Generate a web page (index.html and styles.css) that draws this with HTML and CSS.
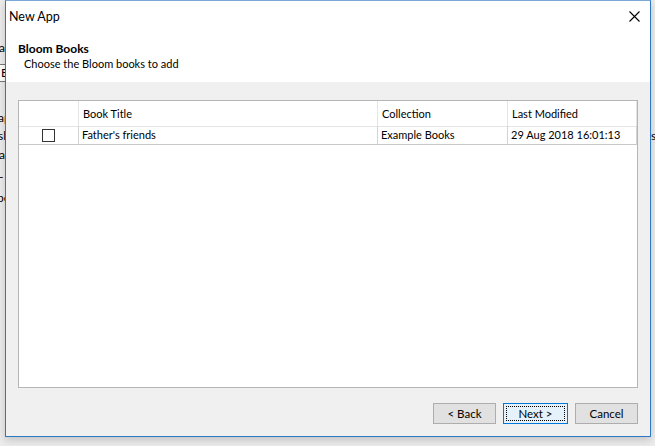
FILE: index.html
```html
<!DOCTYPE html>
<html>
<head>
<meta charset="utf-8">
<link rel="stylesheet" href="styles.css">
</head>
<body>
<div class="desktop">
  <div class="behind">
    <span class="frag f1">a</span>
    <span class="frag combo">E</span>
    <span class="frag f2">ap</span>
    <span class="frag f3">sl</span>
    <span class="frag f4">a</span>
    <span class="frag f5">-</span>
    <span class="frag f6">pe</span>
    <span class="frag f7">s</span>
  </div>
  <div class="window">
    <div class="titlebar">
      <span class="title">New App</span>
      <span class="close">
        <svg width="11" height="11" viewBox="0 0 11 11"><path d="M0.5 0.5 L10.5 10.5 M10.5 0.5 L0.5 10.5" stroke="#000" stroke-width="1.1" fill="none"/></svg>
      </span>
    </div>
    <div class="header">
      <div class="h-title">Bloom Books</div>
      <div class="h-sub">Choose the Bloom books to add</div>
    </div>
    <div class="body">
      <div class="list">
        <div class="row head">
          <div class="cell c1"></div>
          <div class="cell c2">Book Title</div>
          <div class="cell c3">Collection</div>
          <div class="cell c4">Last Modified</div>
        </div>
        <div class="row item">
          <div class="cell c1"><span class="check"></span></div>
          <div class="cell c2">Father's friends</div>
          <div class="cell c3">Example Books</div>
          <div class="cell c4">29 Aug 2018 16:01:13</div>
        </div>
      </div>
      <div class="buttons">
        <button class="btn back">&lt; Back</button>
        <button class="btn next"><span class="focus">Next &gt;</span></button>
        <button class="btn cancel">Cancel</button>
      </div>
    </div>
  </div>
</div>
</body>
</html>
```

FILE: styles.css
```css
* { box-sizing: border-box; }
html, body { margin: 0; padding: 0; }
body {
  width: 655px;
  height: 446px;
  overflow: hidden;
  background: #ececec;
  font-family: "Segoe UI", "Lato", "Liberation Sans", sans-serif;
  font-size: 11px;
  color: #000;
}
.desktop {
  position: relative;
  width: 655px;
  height: 446px;
}
.behind { position: absolute; inset: 0; }
.frag { position: absolute; font-size: 12px; line-height: 14px; color: #000; }
.f1 { left: -1px; top: 41px; }
.combo { left: -4px; top: 64px; width: 10px; height: 18px; border: 1px solid #7a7a7a; background: #fff; padding-left: 4px; line-height: 16px; }
.f2 { left: -2px; top: 111px; }
.f3 { left: -2px; top: 129px; }
.f4 { left: -1px; top: 148px; }
.f5 { left: -1px; top: 170px; }
.f6 { left: -3px; top: 191px; }
.f7 { left: 651px; top: 129px; }

.window {
  position: absolute;
  left: 5px;
  top: 0;
  width: 646px;
  height: 437px;
  border: 1px solid #2b79c2;
  border-top-color: #7aa7d6;
  background: #f0f0f0;
  display: flex;
  flex-direction: column;
  box-shadow: 0 3px 8px rgba(0,0,0,0.18);
}
.titlebar {
  height: 30px;
  background: #fff;
  display: flex;
  align-items: center;
  justify-content: space-between;
  padding-left: 3px;
}
.title { font-size: 12.5px; line-height: 16px; padding-top: 1px; }
.close {
  width: 32px;
  height: 30px;
  display: flex;
  align-items: center;
  justify-content: center;
}
.header {
  height: 51px;
  background: #fff;
  padding: 10px 12px 0 12px;
}
.h-title { font-weight: bold; font-size: 12px; line-height: 15px; }
.h-sub { font-size: 11px; line-height: 15px; padding-left: 6px; }
.body {
  flex: 1;
  padding: 18px 12px 12px 12px;
  display: flex;
  flex-direction: column;
}
.list {
  height: 288px;
  background: #fff;
  border: 1px solid #b5b5b5;
}
.row {
  display: grid;
  grid-template-columns: 60px 299px 130px 129px;
}
.head { height: 25px; }
.head .cell {
  border-right: 1px solid #e5e5e5;
  border-bottom: 1px solid #e5e5e5;
  line-height: 25px;
  padding-left: 4px;
}
.item { height: 18px; }
.item .cell {
  border-right: 1px solid #d4d4d4;
  border-bottom: 1px solid #c8c8c8;
  line-height: 18px;
  padding-left: 3px;
}
.item .c1 { display: flex; align-items: center; justify-content: center; padding-left: 0; }
.check {
  width: 13px;
  height: 13px;
  border: 1px solid #333;
  background: #fff;
}
.buttons {
  margin-top: 15px;
  display: flex;
  justify-content: flex-end;
  gap: 7px;
}
.btn {
  font-family: inherit;
  font-size: 11.5px;
  height: 21px;
  width: 63px;
  padding: 0;
  background: #e1e1e1;
  border: 1px solid #adadad;
  color: #000;
}
.back { width: 63px; }
.next {
  width: 65px;
  background: #e5f1fb;
  border-color: #0078d7;
  padding: 2px;
}
.next .focus {
  display: flex;
  align-items: center;
  justify-content: center;
  width: 100%;
  height: 100%;
  border: 1px dotted #000;
}
.cancel { width: 63px; }
```
